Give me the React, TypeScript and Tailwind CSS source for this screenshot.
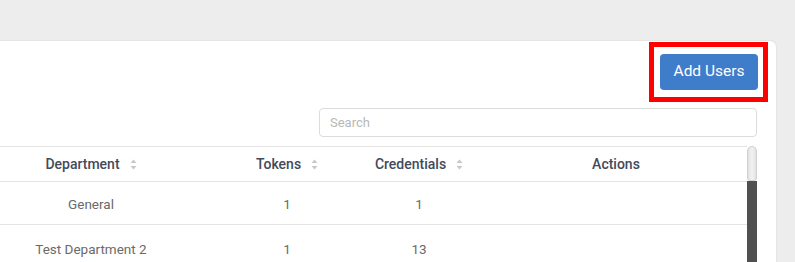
import React from "react";

function SortIcon() {
  return (
    <svg width="7" height="11" viewBox="0 0 7 11" className="ml-[10px] shrink-0">
      <path d="M3.5 0.5 L6.5 4 L0.5 4 Z" fill="#c8c8c8" />
      <path d="M3.5 10.5 L6.5 7 L0.5 7 Z" fill="#c8c8c8" />
    </svg>
  );
}

const rows = [
  { dept: "General", tokens: "1", creds: "1", h: "h-[43px]" },
  { dept: "Test Department 2", tokens: "1", creds: "13", h: "h-[46px]" },
];

export default function App() {
  return (
    <div
      className="h-[262px] overflow-hidden bg-[#ededed] pt-[41px]"
      style={{ fontFamily: 'Roboto, "Open Sans", sans-serif' }}
    >
      <div className="ml-[-60px] mr-[19px] rounded-tr-[6px] bg-white pl-[21px] pr-[18px] pt-[13px] shadow-[0_0_2px_rgba(0,0,0,0.12)]">
        <div className="flex justify-end">
          <div className="relative">
            <button className="flex h-[36px] w-[98px] items-center justify-center rounded-[4px] bg-[#3f7cc9] text-[15.5px] text-white">
              Add Users
            </button>
            <div className="pointer-events-none absolute -bottom-[12px] -left-[11px] -right-[10px] -top-[12px] border-[5px] border-[#ff0000]" />
          </div>
        </div>
        <div className="mt-[18px] flex justify-end pr-[1px]">
          <div className="flex h-[29px] w-[438px] items-center rounded-[4px] border border-[#dcdcdc] pl-[10px] pt-[1px] text-[13px] text-[#b8b8b8]">
            Search
          </div>
        </div>
        <div className="mt-[9px] flex pr-[1px]">
          <div className="flex-1">
            <div className="flex h-[36px] items-center border-y border-[#e4e4e4] text-[14px] font-medium text-[#434a5a]">
              <div className="flex w-[260px] items-center justify-center">
                Department
                <SortIcon />
              </div>
              <div className="flex w-[132px] items-center justify-center">
                Tokens
                <SortIcon />
              </div>
              <div className="flex w-[132px] items-center justify-center">
                Credentials
                <SortIcon />
              </div>
              <div className="flex flex-1 items-center justify-center">Actions</div>
            </div>
            {rows.map((r) => (
              <div
                key={r.dept}
                className={`flex ${r.h} items-center border-b border-[#e4e4e4] pt-[3px] text-[13.5px] text-[#6a6a6a]`}
              >
                <div className="w-[260px] text-center">{r.dept}</div>
                <div className="w-[132px] text-center">{r.tokens}</div>
                <div className="w-[132px] text-center">{r.creds}</div>
                <div className="flex-1" />
              </div>
            ))}
          </div>
          <div className="flex w-[10px] flex-col">
            <div className="h-[35px] rounded-t-[5px] rounded-b-[3px] border border-[#d0d0d0] bg-gradient-to-r from-[#e2e2e2] via-[#f2f2f2] to-[#e2e2e2]" />
            <div className="flex-1 bg-[#505050]" />
          </div>
        </div>
      </div>
    </div>
  );
}
